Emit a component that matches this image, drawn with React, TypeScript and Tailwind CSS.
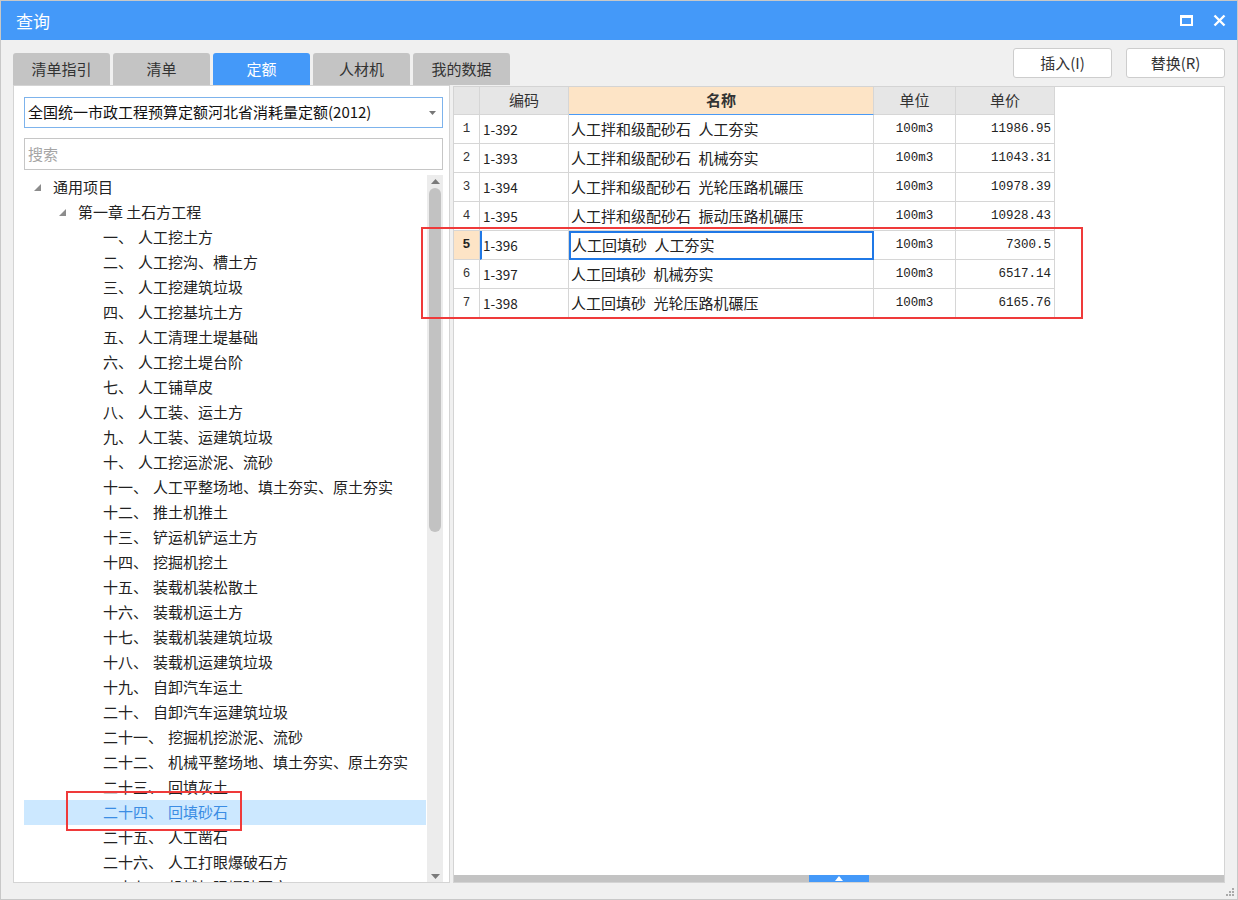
const tabs = ['清单指引', '清单', '定额', '人材机', '我的数据']

const tree = [
  ['一、', '人工挖土方'],
  ['二、', '人工挖沟、槽土方'],
  ['三、', '人工挖建筑垃圾'],
  ['四、', '人工挖基坑土方'],
  ['五、', '人工清理土堤基础'],
  ['六、', '人工挖土堤台阶'],
  ['七、', '人工铺草皮'],
  ['八、', '人工装、运土方'],
  ['九、', '人工装、运建筑垃圾'],
  ['十、', '人工挖运淤泥、流砂'],
  ['十一、', '人工平整场地、填土夯实、原土夯实'],
  ['十二、', '推土机推土'],
  ['十三、', '铲运机铲运土方'],
  ['十四、', '挖掘机挖土'],
  ['十五、', '装载机装松散土'],
  ['十六、', '装载机运土方'],
  ['十七、', '装载机装建筑垃圾'],
  ['十八、', '装载机运建筑垃圾'],
  ['十九、', '自卸汽车运土'],
  ['二十、', '自卸汽车运建筑垃圾'],
  ['二十一、', '挖掘机挖淤泥、流砂'],
  ['二十二、', '机械平整场地、填土夯实、原土夯实'],
  ['二十三、', '回填灰土'],
  ['二十四、', '回填砂石'],
  ['二十五、', '人工凿石'],
  ['二十六、', '人工打眼爆破石方'],
  ['二十七、', '机械打眼爆破石方'],
]

const rows = [
  { code: '1-392', name: '人工拌和级配砂石\u2002人工夯实', unit: '100m3', price: '11986.95' },
  { code: '1-393', name: '人工拌和级配砂石\u2002机械夯实', unit: '100m3', price: '11043.31' },
  { code: '1-394', name: '人工拌和级配砂石\u2002光轮压路机碾压', unit: '100m3', price: '10978.39' },
  { code: '1-395', name: '人工拌和级配砂石\u2002振动压路机碾压', unit: '100m3', price: '10928.43' },
  { code: '1-396', name: '人工回填砂\u2002人工夯实', unit: '100m3', price: '7300.5' },
  { code: '1-397', name: '人工回填砂\u2002机械夯实', unit: '100m3', price: '6517.14' },
  { code: '1-398', name: '人工回填砂\u2002光轮压路机碾压', unit: '100m3', price: '6165.76' },
]

function Caret() {
  return (
    <svg width="7" height="7" viewBox="0 0 7 7" className="shrink-0">
      <polygon points="7,0 7,7 0,7" fill="#8c8c8c" />
    </svg>
  )
}

export default function App() {
  return (
    <div className="relative w-[1238px] h-[900px] flex flex-col bg-[#f0f0f0] border border-[#c8c8c8] font-['Noto_Sans_CJK_SC',sans-serif] text-[#222] overflow-hidden">
      {/* title bar */}
      <div className="h-[39px] shrink-0 bg-[#4499f9] flex items-center justify-between pl-[15px] pr-[11px]">
        <span className="text-white text-[17px]">查询</span>
        <div className="flex items-center gap-[20px]">
          <svg width="13" height="11" viewBox="0 0 13 11">
            <rect x="1" y="1.5" width="11" height="8.5" fill="none" stroke="#fff" strokeWidth="2" />
            <rect x="0" y="0" width="13" height="3" fill="#fff" />
          </svg>
          <svg width="13" height="13" viewBox="0 0 13 13">
            <path d="M1.5 1.5 L11.5 11.5 M11.5 1.5 L1.5 11.5" stroke="#fff" strokeWidth="2.4" />
          </svg>
        </div>
      </div>

      <div className="flex-1 min-h-0 flex flex-col pl-[12px] pr-[12px]">
        {/* tabs + buttons */}
        <div className="h-[45px] shrink-0 flex justify-between">
          <div className="flex items-end gap-[3px]">
            {tabs.map((t, i) => (
              <div
                key={t}
                className={
                  i === 2
                    ? 'w-[97px] h-[32px] rounded-t-[3px] bg-[#4499f9] text-white flex items-center justify-center text-[15px]'
                    : 'w-[97px] h-[32px] rounded-t-[3px] bg-[#c4c4c4] text-[#333] flex items-center justify-center text-[15px]'
                }
              >
                {t}
              </div>
            ))}
          </div>
          <div className="flex items-start gap-[14px] pt-[8px]">
            <button className="w-[99px] h-[30px] bg-white border border-[#cdcdcd] rounded-[3px] text-[15px] text-[#333]">插入(I)</button>
            <button className="w-[99px] h-[30px] bg-white border border-[#cdcdcd] rounded-[3px] text-[15px] text-[#333]">替换(R)</button>
          </div>
        </div>

        <div className="flex-1 min-h-0 flex gap-[3px]">
          {/* left panel */}
          <div className="w-[437px] shrink-0 bg-white border border-[#d4d4d4] flex flex-col pt-[11px] pl-[10px] pr-[6px]">
            <div className="h-[31px] shrink-0 border border-[#7db3ec] flex items-center justify-between pl-[3px] pr-[6px]">
              <span className="text-[15px] text-[#111]">全国统一市政工程预算定额河北省消耗量定额(2012)</span>
              <svg width="7" height="4" viewBox="0 0 7 4">
                <polygon points="0,0 7,0 3.5,4" fill="#777" />
              </svg>
            </div>
            <div className="h-[32px] mt-[10px] shrink-0 border border-[#c6c6c6] flex items-center pl-[3px]">
              <span className="text-[15px] text-[#a5a5a5]">搜索</span>
            </div>
            <div className="flex-1 min-h-0 mt-[5px] flex">
              <div className="flex-1 min-w-0 overflow-hidden">
                <div className="h-[25px] flex items-center pl-[10px] gap-[12px]">
                  <Caret />
                  <span className="text-[15px]">通用项目</span>
                </div>
                <div className="h-[25px] flex items-center pl-[35px] gap-[12px]">
                  <Caret />
                  <span className="text-[15px]">第一章 土石方工程</span>
                </div>
                {tree.map(([no, label]) => (
                  <div
                    key={no}
                    className={
                      no === '二十四、'
                        ? 'h-[25px] flex items-center pl-[79px] gap-[5px] bg-[#cce8ff] text-[#3b8de4] whitespace-nowrap'
                        : 'h-[25px] flex items-center pl-[79px] gap-[5px] whitespace-nowrap'
                    }
                  >
                    <span className="text-[15px]">{no}</span>
                    <span className="text-[15px]">{label}</span>
                  </div>
                ))}
              </div>
              {/* vertical scrollbar */}
              <div className="w-[16px] ml-[1px] shrink-0 bg-[#ececec] flex flex-col items-center">
                <svg width="9" height="5" viewBox="0 0 9 5" className="mt-[4px]">
                  <polygon points="4.5,0 9,5 0,5" fill="#7a7a7a" />
                </svg>
                <div className="w-[12px] h-[344px] mt-[4px] rounded-full bg-[#c2c2c2]" />
                <div className="flex-1" />
                <svg width="9" height="5" viewBox="0 0 9 5" className="mb-[3px]">
                  <polygon points="0,0 9,0 4.5,5" fill="#7a7a7a" />
                </svg>
              </div>
            </div>
          </div>

          {/* right panel */}
          <div className="flex-1 mt-[1px] bg-white border border-[#d4d4d4] flex flex-col">
            <div className="grid grid-cols-[26px_89px_305px_82px_99px] w-fit">
              <div className="h-[28px] bg-[#e6e6e6] border-r border-b border-[#d6d6d6]" />
              <div className="h-[28px] bg-[#e6e6e6] border-r border-b border-[#d6d6d6] flex items-center justify-center text-[15px] text-[#333]">编码</div>
              <div className="h-[28px] bg-[#fde4c6] border-r border-[#d6d6d6] border-b border-b-[#4a9af5] flex items-center justify-center text-[15px] font-bold text-[#333]">名称</div>
              <div className="h-[28px] bg-[#e6e6e6] border-r border-b border-[#d6d6d6] flex items-center justify-center text-[15px] text-[#333]">单位</div>
              <div className="h-[28px] bg-[#e6e6e6] border-r border-b border-[#d6d6d6] flex items-center justify-center text-[15px] text-[#333]">单价</div>
              {rows.map((r, i) => {
                const sel = i === 4
                return [
                  <div
                    key={r.code + 'n'}
                    className={
                      sel
                        ? 'h-[29px] bg-[#fde4c6] border-r border-b border-[#d6d6d6] flex items-center justify-center font-[\'Liberation_Mono\',monospace] text-[13px] font-bold'
                        : 'h-[29px] border-r border-b border-[#d6d6d6] flex items-center justify-center font-[\'Liberation_Mono\',monospace] text-[12.5px] text-[#333]'
                    }
                  >
                    {i + 1}
                  </div>,
                  <div
                    key={r.code + 'c'}
                    className={
                      sel
                        ? 'h-[29px] border-r border-b border-[#d6d6d6] border-l-2 border-l-[#1f78e6] flex items-center pl-[1px] font-[\'Liberation_Sans\',sans-serif] text-[13.5px]'
                        : 'h-[29px] border-r border-b border-[#d6d6d6] flex items-center pl-[3px] font-[\'Liberation_Sans\',sans-serif] text-[13.5px]'
                    }
                  >
                    {r.code}
                  </div>,
                  <div
                    key={r.code + 'm'}
                    className={
                      sel
                        ? 'h-[29px] border-2 border-[#1f78e6] flex items-center pl-[1px] text-[15px] whitespace-nowrap'
                        : 'h-[29px] border-r border-b border-[#d6d6d6] flex items-center pl-[2px] text-[15px] whitespace-nowrap'
                    }
                  >
                    {r.name}
                  </div>,
                  <div key={r.code + 'u'} className="h-[29px] border-r border-b border-[#d6d6d6] flex items-center justify-center font-['Liberation_Mono',monospace] text-[12.5px]">
                    {r.unit}
                  </div>,
                  <div key={r.code + 'p'} className="h-[29px] border-r border-b border-[#d6d6d6] flex items-center justify-end pr-[3px] font-['Liberation_Mono',monospace] text-[12.5px]">
                    {r.price}
                  </div>,
                ]
              })}
            </div>
            <div className="flex-1" />
            <div className="h-[7px] bg-[#c3c3c3] flex justify-center">
              <div className="w-[60px] h-full bg-[#4499f9] flex items-center justify-center">
                <svg width="8" height="5" viewBox="0 0 8 5">
                  <polygon points="4,0 8,5 0,5" fill="#fff" />
                </svg>
              </div>
            </div>
          </div>
        </div>

        <div className="h-[16px] shrink-0 flex justify-end items-end pb-[2px] -mr-[10px]">
          <svg width="10" height="10" viewBox="0 0 10 10">
            <rect x="7" y="1" width="2" height="2" fill="#aaa" />
            <rect x="4" y="4" width="2" height="2" fill="#aaa" />
            <rect x="7" y="4" width="2" height="2" fill="#aaa" />
            <rect x="1" y="7" width="2" height="2" fill="#aaa" />
            <rect x="4" y="7" width="2" height="2" fill="#aaa" />
            <rect x="7" y="7" width="2" height="2" fill="#aaa" />
          </svg>
        </div>
      </div>

      {/* annotation boxes */}
      <div className="absolute left-[420px] top-[226px] w-[662px] h-[92px] border-2 border-[#ef3a3a]" />
      <div className="absolute left-[65px] top-[790px] w-[176px] h-[40px] border-2 border-[#ef3a3a]" />
    </div>
  )
}
